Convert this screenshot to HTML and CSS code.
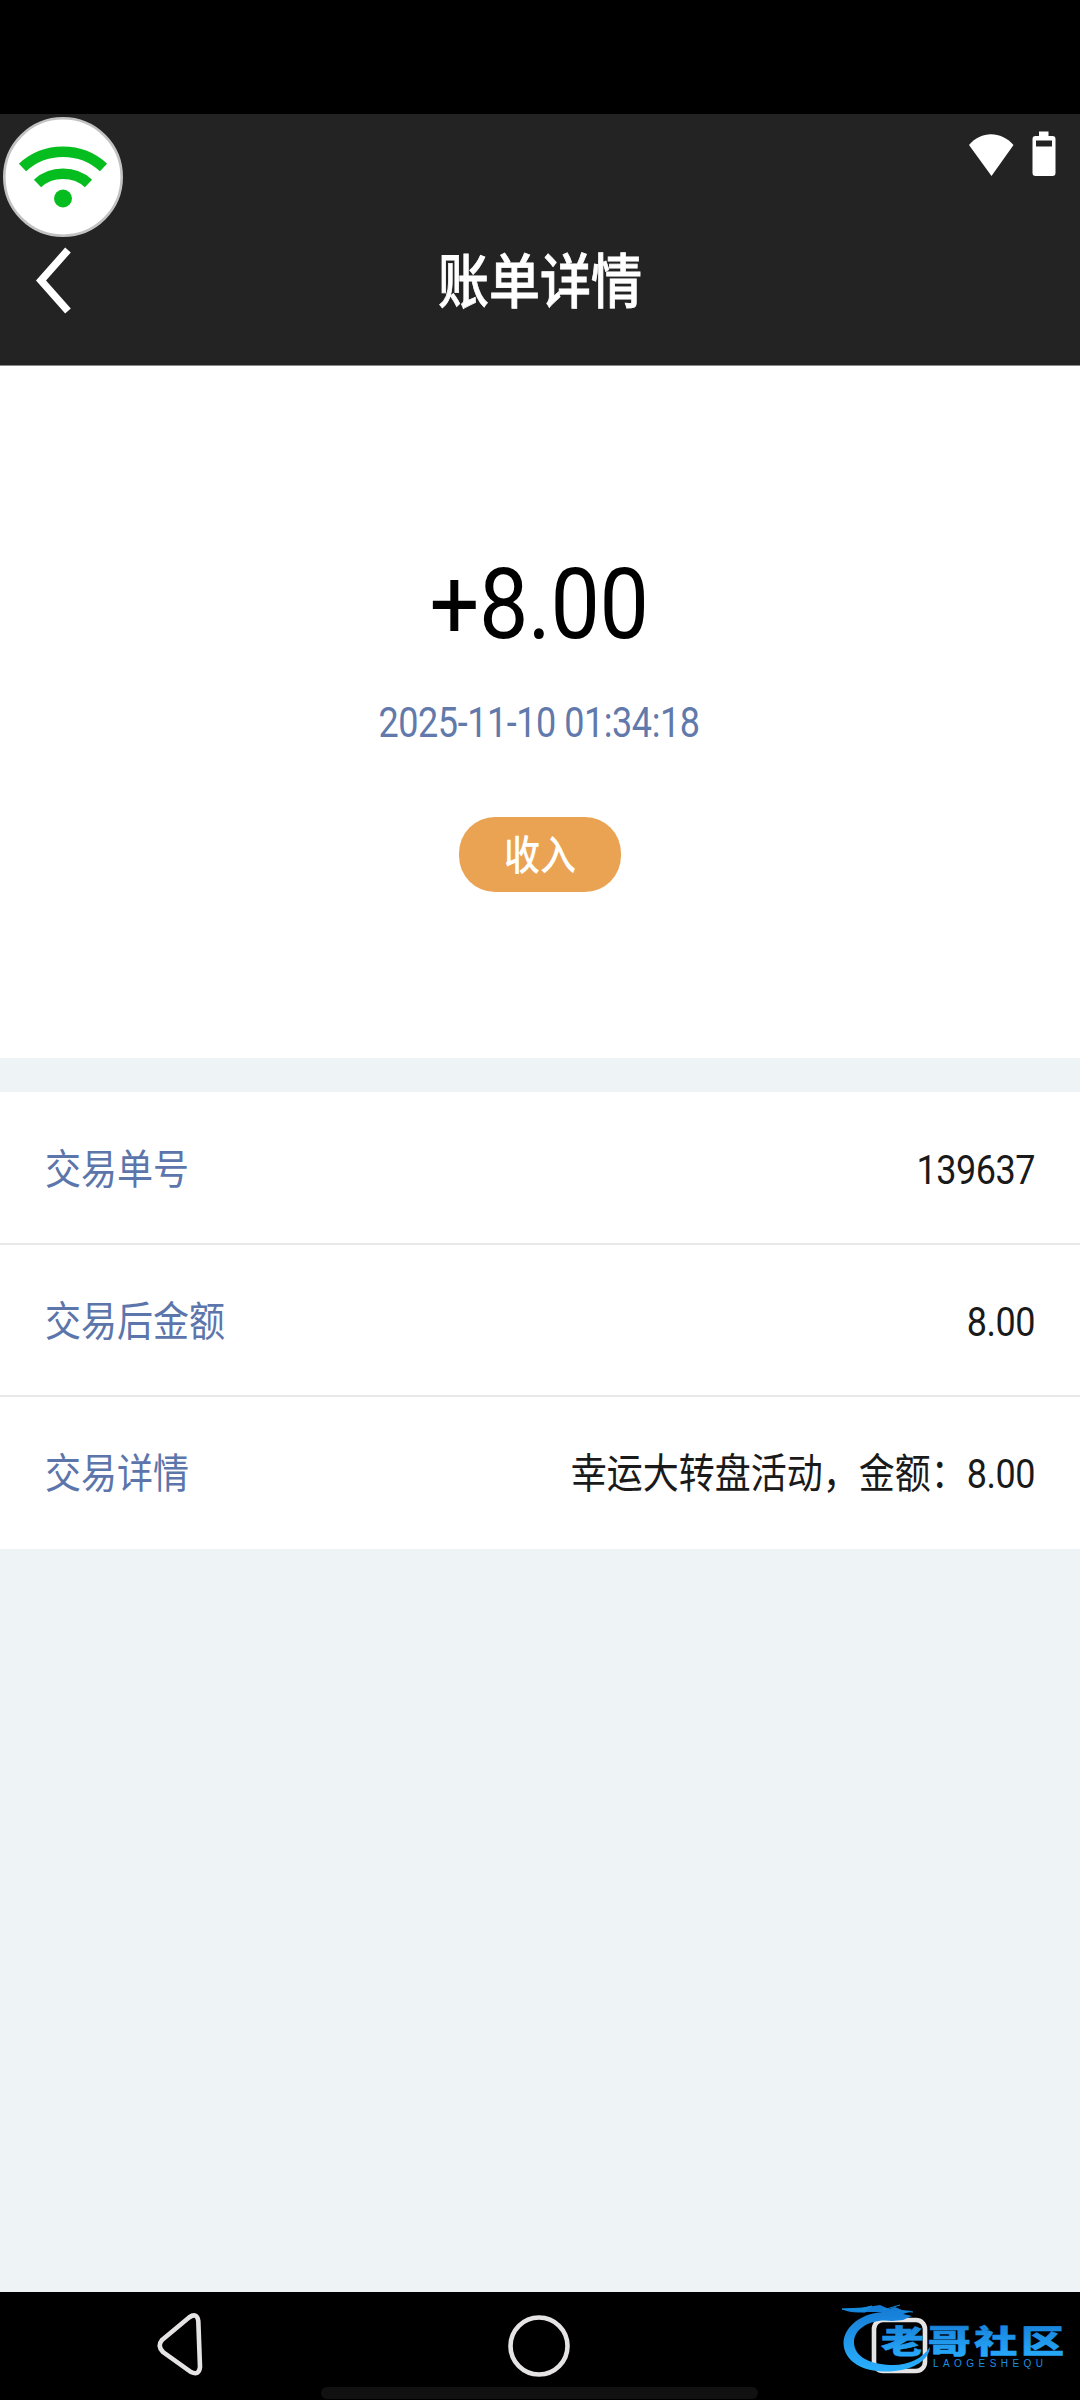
FILE: index.html
```html
<!DOCTYPE html>
<html lang="zh-CN">
<head>
<meta charset="utf-8">
<title>账单详情</title>
<link rel="stylesheet" href="styles.css">
</head>
<body>
<div class="cutout"></div>
<header class="header">
  <div class="status">
    <svg class="status-icons" width="90" height="48" viewBox="0 0 90 48">
      <path d="M2 14C14 -.5 34 -.5 46.500 14L24.500 45Z" fill="#fff"/>
      <path fill-rule="evenodd" d="M72 .500h9.500v4.500h4q3 0 3 3v34q0 3-3 3h-17q-3 0-3-3V8q0-3 3-3H72zM69 9.500v6h16v-6z" fill="#fff"/>
    </svg>
  </div>
  <div class="titlebar">
    <svg class="back" width="36" height="68" viewBox="0 0 36 68"><path d="M33 3L6 33.500L33 64" fill="none" stroke="#fff" stroke-width="7.500"/></svg>
    <h1 class="title">账单详情</h1>
  </div>
  <svg class="wifi-bubble" width="122" height="122" viewBox="0 0 122 122">
    <circle cx="61" cy="61" r="58.700" fill="#fff" stroke="#c2c2c2" stroke-width="2.600"/>
    <g fill="none" stroke="#06bd20" stroke-width="10.500" stroke-linejoin="round">
      <path d="M20.500 51.500C43 30.500 79 30.500 101.500 51.500"/>
      <path d="M35.500 67.500C49 54.500 73 54.500 86.500 67.500"/>
    </g>
    <circle cx="61" cy="82.500" r="9" fill="#06bd20"/>
  </svg>
</header>
<main>
  <section class="summary">
    <div class="amount">+8.00</div>
    <div class="date">2025-11-10 01:34:18</div>
    <div class="tag"><span class="tag-text">收入</span></div>
  </section>
  <section class="details">
    <div class="row"><span class="label">交易单号</span><span class="value"><span class="num">139637</span></span></div>
    <div class="row"><span class="label">交易后金额</span><span class="value"><span class="num">8.00</span></span></div>
    <div class="row"><span class="label">交易详情</span><span class="value">幸运大转盘活动，金额：<span class="num">8.00</span></span></div>
  </section>
</main>
<footer class="nav">
  <svg width="1080" height="108" viewBox="0 0 1080 108">
    <defs>
      <linearGradient id="blue" x1="0" y1="0" x2="0" y2="1"><stop offset="0" stop-color="#1479d2"/><stop offset="1" stop-color="#2ab0ff"/></linearGradient>
    </defs>
    <rect x="321" y="95" width="437" height="12" rx="6" fill="#111"/>
    <g fill="none" stroke="#e6e3e4" stroke-width="4.600">
      <path d="M162 48L189 25.500Q197 20 198.300 29L200 75Q199 84 191 80L163 60Q157 54 162 48Z"/>
      <circle cx="539" cy="54" r="28.500"/>
      <rect x="874" y="28" width="51" height="51" rx="9"/>
    </g>
    <path d="M892 20C865 18 844 33 843.500 51C844 72 868 82 895 79C914 77 929 68 930 55C922 67 907 74 890 73C870 72 854 65 854 50C854 36 872 26 892 29L903 28L912 24L903 22L913 19L902 18L895 15L889 17L880 13L861 16L842 17C849 21 858 21 867 20Z" fill="url(#blue)"/>
    <path d="M842 17L865 20L872 14L863 16ZM883 18L900 13M898 19L913 20" stroke="#178bdc" stroke-width="1" fill="#178bdc"/>
    <text class="mark" transform="translate(881 61) scale(1 .74)" textLength="183" fill="url(#blue)" stroke="url(#blue)">老哥社区</text>
    <text class="mark-sub" x="933" y="75" textLength="110" fill="#1a8fe0">LAOGESHEQU</text>
  </svg>
</footer>
</body>
</html>
```
FILE: styles.css
```css
* { box-sizing: border-box; }
body {
  margin: 0;
  width: 1080px;
  height: 2400px;
  overflow: hidden;
  display: flex;
  flex-direction: column;
  background: #eef3f6;
  font-family: Roboto, "Noto Sans CJK SC", sans-serif;
  font-size: 36px;
}
svg { display: block; }
.cutout { height: 114px; background: #000; }
.header {
  position: relative;
  height: 252px;
  background: #232323;
  border-bottom: 1px solid #8a8888;
}
.status {
  height: 80px;
  padding: 17px 23px 0 0;
  display: flex;
  justify-content: flex-end;
}
.titlebar {
  height: 172px;
  padding: 0 35px;
  display: grid;
  grid-template-columns: 36px 1fr 36px;
  align-items: start;
}
.back { margin-top: 53px; }
.title {
  margin: 55px 0 0;
  height: 68px;
  line-height: 68px;
  font-size: 51px;
  font-weight: 500;
  color: #fff;
  text-align: center;
  -webkit-text-stroke: .7px #fff;
  transform: scaleY(1.15);
}
.wifi-bubble { position: absolute; left: 2px; top: 2px; }
.summary {
  height: 692px;
  padding-top: 178px;
  background: #fff;
  display: flex;
  flex-direction: column;
  align-items: center;
}
.amount {
  height: 120px;
  padding-right: 2px;
  line-height: 120px;
  font-size: 88px;
  letter-spacing: -.5px;
  color: #000;
  transform: scaleY(1.12);
}
.date {
  margin-top: 34px;
  height: 50px;
  padding-right: 2px;
  line-height: 50px;
  letter-spacing: -.45px;
  color: #6179ab;
  transform: scaleY(1.17);
}
.tag {
  margin-top: 69px;
  width: 162px;
  height: 75px;
  border-radius: 36px;
  background: #eaa352;
  display: flex;
  align-items: center;
  justify-content: center;
}
.tag-text {
  padding-top: 2px;
  line-height: 50px;
  font-weight: 500;
  color: #fff;
  transform: scaleY(1.14);
}
.details { margin-top: 34px; background: #fff; }
.row {
  height: 152px;
  padding: 3px 45px 0;
  display: flex;
  align-items: center;
  justify-content: space-between;
  border-bottom: 2px solid #e8e8e8;
}
.row:first-child { height: 153px; padding-top: 4px; }
.row:last-child { border-bottom-color: #fff; }
.label, .value {
  line-height: 50px;
  transform: scaleY(1.15);
}
.label { color: #5c75ab; }
.value { color: #1a1a1a; }
.num { letter-spacing: -.5px; }
.nav { margin-top: auto; height: 108px; background: #000; }
.mark {
  font-family: "Noto Sans CJK SC", sans-serif;
  font-size: 43px;
  font-weight: 900;
  stroke-width: .8px;
}
.mark-sub { font-family: "Liberation Sans", sans-serif; font-size: 10px; }
```
